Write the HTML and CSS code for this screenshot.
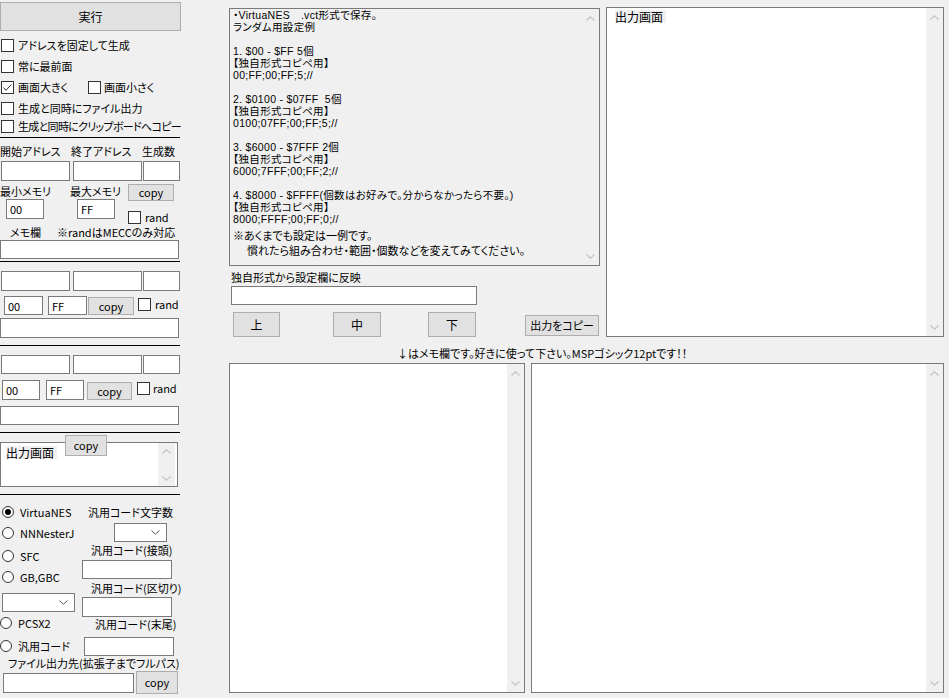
FILE: index.html
```html
<!DOCTYPE html>
<html>
<head>
    <meta charset="utf-8">
    <link rel="stylesheet" href="styles.css">
</head>
<body>
<div class="window">
    <div class="side">
        <button class="btn run-btn">実行</button>

        <div class="check-row r1"><span class="cb"></span>アドレスを固定して生成</div>
        <div class="check-row r2"><span class="cb"></span>常に最前面</div>
        <div class="check-row r3">
            <span class="check-pair"><span class="cb"><svg width="11" height="11" viewBox="0 0 11 11"><polyline points="1.5,5.5 4,8.2 9.5,2.5" fill="none" stroke="#333" stroke-width="1"/></svg></span>画面大きく</span>
            <span class="check-pair"><span class="cb"></span>画面小さく</span>
        </div>
        <div class="check-row r4"><span class="cb"></span>生成と同時にファイル出力</div>
        <div class="check-row r5"><span class="cb"></span><span class="tight">生成と同時にクリップボードへコピー</span></div>

        <div class="sep sep-1"></div>

        <!-- range 1 -->
        <div class="addr-labels"><span class="lbl-start">開始アドレス</span><span class="lbl-end">終了アドレス</span><span>生成数</span></div>
        <div class="addr-row row-1"><input class="tb a-start"><input class="tb a-end"><input class="tb a-count"></div>
        <div class="mem-labels"><span class="lbl-min">最小メモリ</span><span class="lbl-max">最大メモリ</span><button class="btn copy-btn">copy</button></div>
        <div class="mem-row">
            <input class="tb mem-min" value="00"><input class="tb mem-max" value="FF">
            <span class="rand"><span class="cb"></span>rand</span>
        </div>
        <div class="memo-labels"><span class="lbl-memo">メモ欄</span><span>※randはMECCのみ対応</span></div>
        <input class="tb full-tb memo-1">

        <div class="sep sep-2"></div>

        <!-- range 2 -->
        <div class="addr-row row-2"><input class="tb a-start"><input class="tb a-end"><input class="tb a-count"></div>
        <div class="range-row range-2">
            <input class="tb r-min" value="00"><input class="tb r-max" value="FF">
            <button class="btn copy-btn">copy</button>
            <span class="rand"><span class="cb"></span>rand</span>
        </div>
        <input class="tb full-tb memo-2">

        <div class="sep sep-3"></div>

        <!-- range 3 -->
        <div class="addr-row row-3"><input class="tb a-start"><input class="tb a-end"><input class="tb a-count"></div>
        <div class="range-row range-3">
            <input class="tb r-min" value="00"><input class="tb r-max" value="FF">
            <button class="btn copy-btn">copy</button>
            <span class="rand"><span class="cb"></span>rand</span>
        </div>
        <input class="tb full-tb memo-3">

        <div class="sep sep-4"></div>

        <div class="mini-out">
            <div class="box-body"><span class="box-label">出力画面</span></div>
            <div class="vscroll">
                <svg width="9" height="5" viewBox="0 0 9 5"><polyline points="0.5,4.5 4.5,0.8 8.5,4.5" fill="none" stroke="#c4c4c4" stroke-width="1.2"/></svg>
                <svg width="9" height="5" viewBox="0 0 9 5"><polyline points="0.5,0.5 4.5,4.2 8.5,0.5" fill="none" stroke="#c4c4c4" stroke-width="1.2"/></svg>
            </div>
            <button class="btn copy-over">copy</button>
        </div>

        <div class="sep sep-5"></div>

        <div class="radio-grid">
            <div class="radio-col">
                <div class="radio r-virtua"><span class="rb on"></span>VirtuaNES</div>
                <div class="radio r-nnn"><span class="rb"></span>NNNesterJ</div>
                <div class="radio r-sfc"><span class="rb"></span>SFC</div>
                <div class="radio r-gb"><span class="rb"></span>GB,GBC</div>
                <div class="dd dd-console"><svg width="9" height="5" viewBox="0 0 9 5"><polyline points="0.5,0.5 4.5,4.2 8.5,0.5" fill="none" stroke="#555" stroke-width="1"/></svg></div>
                <div class="radio flush r-ps"><span class="rb"></span>PCSX2</div>
                <div class="radio flush r-gen"><span class="rb"></span>汎用コード</div>
            </div>
            <div class="opt-col">
                <div class="opt-label l-len">汎用コード文字数</div>
                <div class="dd dd-len"><svg width="9" height="5" viewBox="0 0 9 5"><polyline points="0.5,0.5 4.5,4.2 8.5,0.5" fill="none" stroke="#555" stroke-width="1"/></svg></div>
                <div class="opt-label l-head">汎用コード(接頭)</div>
                <input class="tb opt-tb t-head">
                <div class="opt-label l-sep">汎用コード(区切り)</div>
                <input class="tb opt-tb t-sep">
                <div class="opt-label l-tail">汎用コード(末尾)</div>
                <input class="tb opt-tb t-tail">
            </div>
        </div>

        <div class="file-label">ファイル出力先(拡張子までフルパス)</div>
        <div class="file-row">
            <input class="tb file-tb">
            <button class="btn copy-btn file-copy">copy</button>
        </div>
    </div>

    <div class="main">
        <div class="top-row">
            <div class="mid-col">
                <div class="info-box">
                    <div class="info-text">
                        <div class="ln">・VirtuaNES　.vct形式で保存。</div>
                        <div class="ln">ランダム用設定例</div>
                        <div class="ln"></div>
                        <div class="ln">1. $00 - $FF 5個</div>
                        <div class="ln">【独自形式コピペ用】</div>
                        <div class="ln">00;FF;00;FF;5;//</div>
                        <div class="ln"></div>
                        <div class="ln">2. $0100 - $07FF&nbsp; 5個</div>
                        <div class="ln">【独自形式コピペ用】</div>
                        <div class="ln">0100;07FF;00;FF;5;//</div>
                        <div class="ln"></div>
                        <div class="ln">3. $6000 - $7FFF 2個</div>
                        <div class="ln">【独自形式コピペ用】</div>
                        <div class="ln">6000;7FFF;00;FF;2;//</div>
                        <div class="ln"></div>
                        <div class="ln">4. $8000 - $FFFF(個数はお好みで。分からなかったら不要。)</div>
                        <div class="ln">【独自形式コピペ用】</div>
                        <div class="ln">8000;FFFF;00;FF;0;//</div>
                        <div class="note">
                            <div>※あくまでも設定は一例です。</div>
                            <div class="indent">慣れたら組み合わせ・範囲・個数などを変えてみてください。</div>
                        </div>
                    </div>
                    <div class="vscroll">
                        <svg width="9" height="5" viewBox="0 0 9 5"><polyline points="0.5,4.5 4.5,0.8 8.5,4.5" fill="none" stroke="#c4c4c4" stroke-width="1.2"/></svg>
                        <svg width="9" height="5" viewBox="0 0 9 5"><polyline points="0.5,0.5 4.5,4.2 8.5,0.5" fill="none" stroke="#c4c4c4" stroke-width="1.2"/></svg>
                    </div>
                </div>
                <div class="parse-label">独自形式から設定欄に反映</div>
                <input class="tb parse-tb">
                <div class="nav-row">
                    <button class="btn nav-btn nav-up">上</button>
                    <button class="btn nav-btn nav-mid">中</button>
                    <button class="btn nav-btn nav-down">下</button>
                    <button class="btn out-copy">出力をコピー</button>
                </div>
            </div>

            <div class="out-box">
                <div class="box-body"><span class="box-label">出力画面</span></div>
                <div class="vscroll">
                    <svg width="9" height="5" viewBox="0 0 9 5"><polyline points="0.5,4.5 4.5,0.8 8.5,4.5" fill="none" stroke="#c4c4c4" stroke-width="1.2"/></svg>
                    <svg width="9" height="5" viewBox="0 0 9 5"><polyline points="0.5,0.5 4.5,4.2 8.5,0.5" fill="none" stroke="#c4c4c4" stroke-width="1.2"/></svg>
                </div>
            </div>
        </div>

        <div class="memo-caption">↓はメモ欄です。好きに使って下さい。MSPゴシック12ptです！！</div>

        <div class="memo-row">
            <div class="memo-box memo-left">
                <div class="box-body"></div>
                <div class="vscroll">
                    <svg width="9" height="5" viewBox="0 0 9 5"><polyline points="0.5,4.5 4.5,0.8 8.5,4.5" fill="none" stroke="#c4c4c4" stroke-width="1.2"/></svg>
                    <svg width="9" height="5" viewBox="0 0 9 5"><polyline points="0.5,0.5 4.5,4.2 8.5,0.5" fill="none" stroke="#c4c4c4" stroke-width="1.2"/></svg>
                </div>
            </div>
            <div class="memo-box memo-right">
                <div class="box-body"></div>
                <div class="vscroll">
                    <svg width="9" height="5" viewBox="0 0 9 5"><polyline points="0.5,4.5 4.5,0.8 8.5,4.5" fill="none" stroke="#c4c4c4" stroke-width="1.2"/></svg>
                    <svg width="9" height="5" viewBox="0 0 9 5"><polyline points="0.5,0.5 4.5,4.2 8.5,0.5" fill="none" stroke="#c4c4c4" stroke-width="1.2"/></svg>
                </div>
            </div>
        </div>
    </div>
</div>
</body>
</html>
```

FILE: styles.css
```css
* {
    box-sizing: border-box;
}

body {
    margin: 0;
    background: #f0f0f0;
    font-family: "Noto Sans CJK JP", "Noto Sans", sans-serif;
    font-size: 11px;
    font-feature-settings: "palt";
    color: #000;
}

.window {
    display: flex;
    width: 949px;
    height: 698px;
    overflow: hidden;
}

/* common controls */
.btn {
    display: block;
    margin: 0;
    padding: 0;
    background: #e1e1e1;
    border: 1px solid #adadad;
    font-family: inherit;
    font-size: 11px;
    font-feature-settings: "palt";
    color: #000;
    line-height: 1;
}

.tb {
    display: block;
    margin: 0;
    padding: 0 3px;
    height: 20px;
    border: 1px solid #7a7a7a;
    background: #fff;
    font-family: inherit;
    font-size: 11px;
    font-feature-settings: "palt";
    color: #000;
    line-height: 1;
    outline: none;
}

.cb {
    display: flex;
    align-items: center;
    justify-content: center;
    flex: none;
    width: 13px;
    height: 13px;
    margin-right: 4px;
    border: 1px solid #333;
    background: #fff;
}

.rb {
    display: flex;
    align-items: center;
    justify-content: center;
    flex: none;
    width: 12px;
    height: 12px;
    margin-right: 6px;
    border: 1px solid #333;
    border-radius: 50%;
    background: #fff;
}

.rb.on::after {
    content: "";
    width: 6px;
    height: 6px;
    border-radius: 50%;
    background: #000;
}

.sep {
    width: 180px;
    height: 1px;
    background: #000;
}

.vscroll {
    display: flex;
    flex-direction: column;
    justify-content: space-between;
    align-items: center;
    flex: none;
    width: 17px;
    padding: 7px 0 6px;
    background: #f0f0f0;
}

.vscroll svg {
    display: block;
}

.box-body {
    flex: 1;
}

.box-label {
    display: inline-block;
    background: #f0f0f0;
    font-size: 12px;
    line-height: 13px;
    padding-right: 3px;
}

.dd {
    display: flex;
    align-items: center;
    justify-content: flex-end;
    height: 19px;
    padding-right: 6px;
    border: 1px solid #7a7a7a;
    background: #fff;
}

/* left panel */
.side {
    width: 181px;
    flex: none;
    white-space: nowrap;
}

.run-btn {
    width: 181px;
    height: 29px;
    margin-top: 2px;
    font-size: 12px;
}

.check-row {
    display: flex;
    align-items: center;
    height: 14px;
    padding-left: 1px;
    line-height: 14px;
}

.r1 { margin-top: 7px; }
.r2 { margin-top: 7px; }
.r3 { margin-top: 7px; }
.r4 { margin-top: 7px; }
.r5 { margin-top: 4px; }

.tight {
    letter-spacing: -0.7px;
}

.check-pair {
    display: flex;
    align-items: center;
}

.check-pair:first-child {
    width: 87px;
}

.check-pair + .check-pair .cb {
    margin-right: 3px;
}

.sep-1 { margin-top: 4px; }
.sep-2 { margin-top: 2px; }
.sep-3 { margin-top: 7px; }
.sep-4 { margin-top: 7px; }
.sep-5 { margin-top: 7px; }

.addr-labels {
    display: flex;
    margin-top: 6px;
    line-height: 14px;
}

.lbl-start,
.lbl-end {
    width: 71px;
}

.addr-row {
    display: flex;
    padding-left: 1px;
}

.addr-row .tb {
    height: 20px;
}

.row-1 { margin-top: 3px; }
.row-2 { margin-top: 9px; }
.row-3 { margin-top: 9px; }
.row-3 .tb { height: 19px; }

.a-start { width: 69px; }
.a-end { width: 69px; margin-left: 3px; }
.a-count { width: 37px; margin-left: 1px; }

.mem-labels {
    display: flex;
    align-items: flex-start;
    height: 16px;
    margin-top: 3px;
    line-height: 14px;
}

.lbl-min { width: 70px; }
.lbl-max { width: 58px; }

.copy-btn {
    width: 46px;
    height: 17px;
}

.mem-row {
    display: flex;
    align-items: flex-start;
    height: 24px;
    margin-top: -1px;
}

.mem-min { width: 38px; margin-left: 6px; }
.mem-max { width: 38px; margin-left: 33px; }

.rand {
    display: flex;
    align-items: center;
    line-height: 13px;
}

.mem-row .rand {
    margin-left: 13px;
    margin-top: 12px;
}

.memo-labels {
    display: flex;
    margin-top: 2px;
    line-height: 14px;
}

.lbl-memo {
    width: 57px;
    padding-left: 10px;
}

.full-tb {
    width: 179px;
    height: 19px;
}

.memo-1 { margin-top: 1px; }
.memo-2 { margin-top: 3px; height: 20px; }
.memo-3 { margin-top: 6px; }

.range-row {
    display: flex;
    align-items: flex-start;
}

.range-2 { margin-top: 5px; height: 19px; }
.range-2 .r-min { width: 39px; height: 19px; margin-left: 4px; }
.range-2 .r-max { width: 39px; height: 19px; margin-left: 5px; }
.range-2 .copy-btn { margin-left: 1px; margin-top: 1px; height: 18px; }
.range-2 .rand { margin-left: 4px; margin-top: 2px; }

.range-3 { margin-top: 6px; height: 20px; }
.range-3 .r-min { width: 38px; margin-left: 2px; }
.range-3 .r-max { width: 38px; margin-left: 6px; }
.range-3 .copy-btn { width: 45px; height: 18px; margin-left: 3px; margin-top: 2px; }
.range-3 .rand { margin-left: 5px; margin-top: 2px; }
.range-3 .rand .cb { margin-right: 3px; }

.mini-out {
    position: relative;
    display: flex;
    width: 178px;
    height: 45px;
    margin-top: 9px;
    padding: 2px 2px 0 5px;
    border: 1px solid #7a7a7a;
    background: #fff;
}

.mini-out .vscroll {
    margin: -2px 0 0;
    padding: 6px 0 5px;
}

.copy-over {
    position: absolute;
    left: 64px;
    top: -8px;
    width: 42px;
    height: 21px;
}

.radio-grid {
    display: grid;
    grid-template-columns: 82px 98px;
}

.radio-col,
.opt-col {
    display: flex;
    flex-direction: column;
    align-items: flex-start;
}

.radio {
    display: flex;
    align-items: center;
    height: 16px;
    padding-left: 2px;
    line-height: 16px;
}

.radio.flush {
    padding-left: 0;
}

.r-virtua { margin-top: 9px; }
.r-nnn { margin-top: 5px; }
.r-sfc { margin-top: 7px; }
.r-gb { margin-top: 5px; }
.dd-console { width: 73px; margin: 8px 0 0 2px; }
.r-ps { margin-top: 3px; }
.r-gen { margin-top: 7px; }

.opt-label {
    line-height: 14px;
}

.l-len { margin-top: 10px; padding-left: 6px; }
.dd-len { width: 53px; margin: 4px 0 0 32px; }
.l-head { margin-top: 1px; padding-left: 9px; }
.l-sep { margin-top: 2px; padding-left: 9px; }
.l-tail { padding-left: 13px; }

.opt-tb {
    width: 90px;
    height: 19px;
}

.t-head { margin-top: 3px; }
.t-sep { margin-top: 2px; height: 20px; }
.t-tail { margin-top: 6px; margin-left: 2px; }

.file-label {
    padding-left: 8px;
    line-height: 14px;
}

.file-row {
    display: flex;
    align-items: flex-start;
    margin-top: 1px;
}

.file-tb {
    width: 131px;
    margin: 2px 0 0 3px;
}

.file-copy {
    width: 42px;
    height: 23px;
    margin-left: 2px;
}

/* main area */
.main {
    width: 715px;
    margin-left: 48px;
    flex: none;
}

.top-row {
    display: flex;
    align-items: flex-start;
}

.mid-col {
    width: 371px;
    margin-top: 8px;
}

.info-box {
    display: flex;
    height: 258px;
    border: 1px solid #7a7a7a;
    background: #f0f0f0;
}

.info-text {
    flex: 1;
    padding: 0 0 0 3px;
    font-family: "Liberation Sans", "Noto Sans CJK JP", sans-serif;
    font-size: 10.5px;
    white-space: nowrap;
}

.ln {
    height: 12px;
    line-height: 12px;
    letter-spacing: 0.3px;
}

.note {
    margin-top: 4px;
    line-height: 15px;
    font-size: 11px;
}

.indent {
    padding-left: 14px;
}

.parse-label {
    margin-top: 4px;
    padding-left: 2px;
    line-height: 14px;
}

.parse-tb {
    width: 246px;
    height: 19px;
    margin: 2px 0 0 2px;
}

.nav-row {
    display: flex;
    align-items: flex-start;
    height: 25px;
    margin-top: 7px;
}

.nav-btn {
    width: 48px;
    height: 25px;
    font-size: 12px;
}

.nav-up { width: 47px; margin-left: 4px; }
.nav-mid { margin-left: 53px; }
.nav-down { margin-left: 47px; }

.out-copy {
    width: 74px;
    height: 21px;
    margin: 3px 0 0 49px;
}

.out-box {
    display: flex;
    width: 338px;
    height: 330px;
    margin: 7px 0 0 6px;
    padding-left: 8px;
    border: 1px solid #7a7a7a;
    background: #fff;
}

.out-box .box-body {
    padding-top: 1px;
}

.memo-caption {
    margin-top: 9px;
    padding-left: 168px;
    line-height: 14px;
}

.memo-row {
    display: flex;
    margin-top: 3px;
}

.memo-box {
    display: flex;
    height: 330px;
    border: 1px solid #7a7a7a;
    background: #fff;
}

.memo-left { width: 296px; }
.memo-right { width: 413px; margin-left: 6px; }
```
